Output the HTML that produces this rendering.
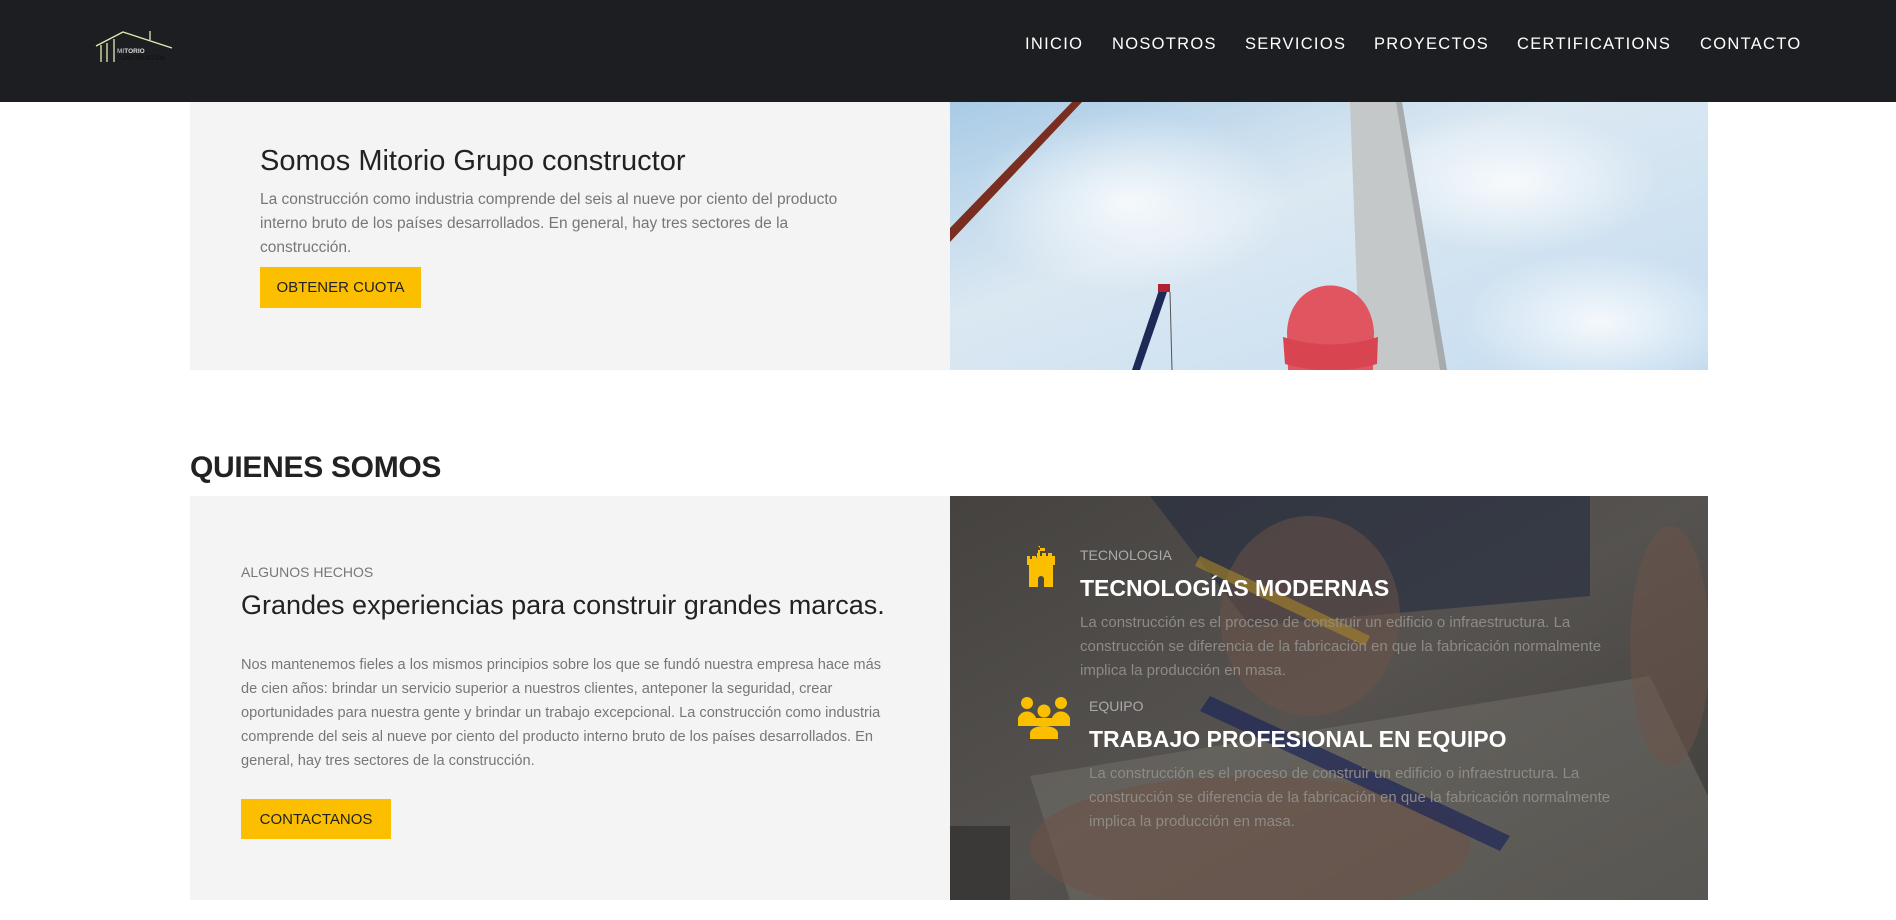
<!DOCTYPE html>
<html><head><meta charset="utf-8"><style>
*{margin:0;padding:0;box-sizing:border-box}
body{width:1896px;height:920px;background:#fff;font-family:"Segoe UI","Liberation Sans",sans-serif;overflow:hidden;position:relative}
.nav{position:absolute;left:0;top:0;width:1896px;height:102px;background:#1d1e22}
.nav a{position:absolute;top:35px;color:#fff;font-size:16.5px;letter-spacing:1.3px;text-decoration:none}
.abs{position:absolute}
.btn{position:absolute;background:#fbbf00;color:#222;font-size:15px;display:flex;align-items:center;justify-content:center}
</style></head><body>
<div class="nav">
<svg class="abs" style="left:94px;top:28px" width="90" height="36" viewBox="0 0 90 36">
<g stroke="#d9f0b0" stroke-width="1.3" fill="none">
<path d="M2 18 L29 4 L78 20"/><path d="M7 17 V34 M13 15 V34 M20 11 V34"/><path d="M56 3 V12"/>
</g>
<text x="23" y="25" font-size="6.5" font-family="Liberation Sans" font-weight="bold" fill="#aaa">MI<tspan fill="#ddd">TORIO</tspan></text>
<text x="23" y="32" font-size="6" font-family="Liberation Sans" fill="#111">CONSTRUCTION</text>
</svg>
<a style="left:1025px">INICIO</a>
<a style="left:1112px">NOSOTROS</a>
<a style="left:1245px">SERVICIOS</a>
<a style="left:1374px">PROYECTOS</a>
<a style="left:1517px">CERTIFICATIONS</a>
<a style="left:1700px">CONTACTO</a>
</div>

<div class="abs" style="left:190px;top:102px;width:760px;height:268px;background:#f4f4f4"></div>
<div class="abs" style="left:260px;top:145px;font-size:29px;color:#222;white-space:nowrap">Somos Mitorio Grupo constructor</div>
<div class="abs" style="left:260px;top:188px;width:620px;font-size:15.5px;line-height:24px;color:#777">La construcción como industria comprende del seis al nueve por ciento del producto interno bruto de los países desarrollados. En general, hay tres sectores de la construcción.</div>
<div class="btn" style="left:260px;top:267px;width:161px;height:41px">OBTENER CUOTA</div>

<svg class="abs" style="left:950px;top:102px" width="758" height="268" viewBox="0 0 758 268">
<defs><linearGradient id="sky" x1="0" y1="0" x2="1" y2="1"><stop offset="0" stop-color="#a9cbe6"/><stop offset=".4" stop-color="#dbe8f2"/><stop offset="1" stop-color="#c4dcf0"/></linearGradient>
<radialGradient id="c1" cx=".5" cy=".5" r=".5"><stop offset="0" stop-color="#fff" stop-opacity=".8"/><stop offset="1" stop-color="#fff" stop-opacity="0"/></radialGradient></defs>
<rect width="758" height="268" fill="url(#sky)"/>
<ellipse cx="180" cy="100" rx="160" ry="90" fill="url(#c1)"/>
<ellipse cx="560" cy="80" rx="150" ry="70" fill="url(#c1)"/>
<ellipse cx="650" cy="220" rx="140" ry="70" fill="url(#c1)"/>
<path d="M0 126 L122 0 L132 0 L0 140Z" fill="#7a2e20"/>
<path d="M400 0 L452 0 L497 268 L410 268Z" fill="#c5c8c9"/>
<path d="M446 0 L452 0 L497 268 L490 268Z" fill="#a7abad"/>
<path d="M182 268 L210 185 L218 187 L190 268Z" fill="#1d2a55"/>
<path d="M208 182 h12 v8 h-12z" fill="#b02030"/>
<line x1="220" y1="190" x2="222" y2="268" stroke="#555" stroke-width="1"/>
<path d="M338 268 L337 230 C340 168 420 168 424 230 L423 268Z" fill="#e05560"/>
<path d="M333 235 Q381 250 428 235 L427 262 Q381 275 335 262Z" fill="#d84550"/>
</svg>

<div class="abs" style="left:190px;top:451px;font-size:30px;font-weight:600;color:#222;letter-spacing:-0.3px">QUIENES SOMOS</div>

<div class="abs" style="left:190px;top:496px;width:760px;height:404px;background:#f4f4f4"></div>
<div class="abs" style="left:241px;top:564px;font-size:14px;color:#777;font-weight:300">ALGUNOS HECHOS</div>
<div class="abs" style="left:241px;top:590px;font-size:27px;color:#222;font-weight:300;white-space:nowrap">Grandes experiencias para construir grandes marcas.</div>
<div class="abs" style="left:241px;top:653px;width:660px;font-size:14.6px;line-height:24px;color:#777;font-weight:300">Nos mantenemos fieles a los mismos principios sobre los que se fundó nuestra empresa hace más de cien años: brindar un servicio superior a nuestros clientes, anteponer la seguridad, crear oportunidades para nuestra gente y brindar un trabajo excepcional. La construcción como industria comprende del seis al nueve por ciento del producto interno bruto de los países desarrollados. En general, hay tres sectores de la construcción.</div>
<div class="btn" style="left:241px;top:799px;width:150px;height:40px">CONTACTANOS</div>

<svg class="abs" style="left:950px;top:496px" width="758" height="404" viewBox="0 0 758 404">
<defs><linearGradient id="bg2" x1="0" y1="0" x2="1" y2="1"><stop offset="0" stop-color="#45423f"/><stop offset=".5" stop-color="#55524f"/><stop offset="1" stop-color="#3f3d3b"/></linearGradient></defs>
<rect width="758" height="404" fill="url(#bg2)"/>
<path d="M200 0 L640 0 L640 100 L300 130 Z" fill="#232b40" opacity=".6"/>
<ellipse cx="360" cy="120" rx="90" ry="100" fill="#6e5448" opacity=".5"/>
<path d="M250 60 L420 140 L415 150 L245 70Z" fill="#a88528" opacity=".6"/>
<path d="M80 280 L700 180 L758 300 L758 404 L120 404Z" fill="#77756f" opacity=".45"/>
<ellipse cx="300" cy="350" rx="220" ry="70" fill="#6e5245" opacity=".55"/>
<path d="M260 200 L560 340 L550 355 L250 215Z" fill="#1e2758" opacity=".7"/>
<rect x="0" y="330" width="60" height="74" fill="#2a2a2a" opacity=".6"/>
<ellipse cx="720" cy="150" rx="40" ry="120" fill="#6e5448" opacity=".5"/>
</svg>

<svg class="abs" style="left:1019px;top:546px" width="40" height="41" viewBox="0 0 40 41">
<path fill="#fbbf00" d="M19 0 h2 v5 h5 v-3 h-5z M18 10 v-3 h1 v-3 h2 v6 h2 v-3 h4 v3 h2 v-3 h4 v3 h3 v9 h-2 v22 h-9 v-8 a3 3 0 0 0 -6 0 v8 h-9 v-22 h-2 v-9 h3 v3 h2 v-3 h4 v3z"/>
</svg>
<div class="abs" style="left:1080px;top:547px;font-size:14px;color:#aaa;font-weight:300">TECNOLOGIA</div>
<div class="abs" style="left:1080px;top:575px;font-size:23px;color:#fff;font-weight:600;white-space:nowrap">TECNOLOGÍAS MODERNAS</div>
<div class="abs" style="left:1080px;top:611px;width:560px;font-size:15px;line-height:24px;color:#8e8a86">La construcción es el proceso de construir un edificio o infraestructura. La construcción se diferencia de la fabricación en que la fabricación normalmente implica la producción en masa.</div>

<svg class="abs" style="left:1018px;top:696px" width="52" height="43" viewBox="0 0 52 43">
<g fill="#fbbf00"><circle cx="9" cy="7" r="6"/><circle cx="43" cy="7" r="6"/><circle cx="26" cy="15" r="6.5"/>
<path d="M0 28 a9 9 0 0 1 18 -6 h16 a9 9 0 0 1 18 6 v2 h-52z"/><path d="M12 43 v-6 a14 7 0 0 1 28 0 v6z"/></g>
</svg>
<div class="abs" style="left:1089px;top:698px;font-size:14px;color:#aaa;font-weight:300">EQUIPO</div>
<div class="abs" style="left:1089px;top:726px;font-size:23px;color:#fff;font-weight:600;white-space:nowrap">TRABAJO PROFESIONAL EN EQUIPO</div>
<div class="abs" style="left:1089px;top:762px;width:560px;font-size:15px;line-height:24px;color:#8e8a86">La construcción es el proceso de construir un edificio o infraestructura. La construcción se diferencia de la fabricación en que la fabricación normalmente implica la producción en masa.</div>
</body></html>
